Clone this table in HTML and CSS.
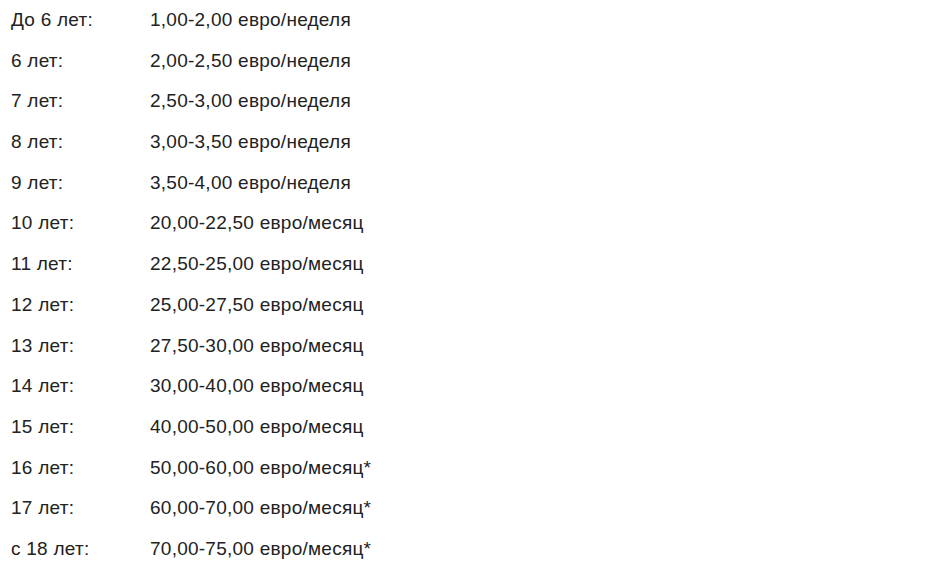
FILE: index.html
```html
<!DOCTYPE html>
<html lang="ru">
<head>
<meta charset="utf-8">
<link rel="stylesheet" href="styles.css">
</head>
<body>
<div class="list">
  <div class="age">До 6 лет:</div><div class="price">1,00-2,00 евро/неделя</div>
  <div class="age">6 лет:</div><div class="price">2,00-2,50 евро/неделя</div>
  <div class="age">7 лет:</div><div class="price">2,50-3,00 евро/неделя</div>
  <div class="age">8 лет:</div><div class="price">3,00-3,50 евро/неделя</div>
  <div class="age">9 лет:</div><div class="price">3,50-4,00 евро/неделя</div>
  <div class="age">10 лет:</div><div class="price">20,00-22,50 евро/месяц</div>
  <div class="age">11 лет:</div><div class="price">22,50-25,00 евро/месяц</div>
  <div class="age">12 лет:</div><div class="price">25,00-27,50 евро/месяц</div>
  <div class="age">13 лет:</div><div class="price">27,50-30,00 евро/месяц</div>
  <div class="age">14 лет:</div><div class="price">30,00-40,00 евро/месяц</div>
  <div class="age">15 лет:</div><div class="price">40,00-50,00 евро/месяц</div>
  <div class="age">16 лет:</div><div class="price">50,00-60,00 евро/месяц*</div>
  <div class="age">17 лет:</div><div class="price">60,00-70,00 евро/месяц*</div>
  <div class="age">с 18 лет:</div><div class="price">70,00-75,00 евро/месяц*</div>
</div>
</body>
</html>
```
FILE: styles.css
```css
html, body {
  margin: 0;
  background: #ffffff;
}
body {
  font-family: "Liberation Sans", Arial, sans-serif;
  font-size: 19px;
  letter-spacing: 0.25px;
  color: #222222;
}
.list {
  display: grid;
  grid-template-columns: 139px auto;
  grid-auto-rows: 40.7px;
  padding: 0 0 0 11px;
  align-items: center;
}
.age, .price {
  line-height: 40.7px;
}
```
